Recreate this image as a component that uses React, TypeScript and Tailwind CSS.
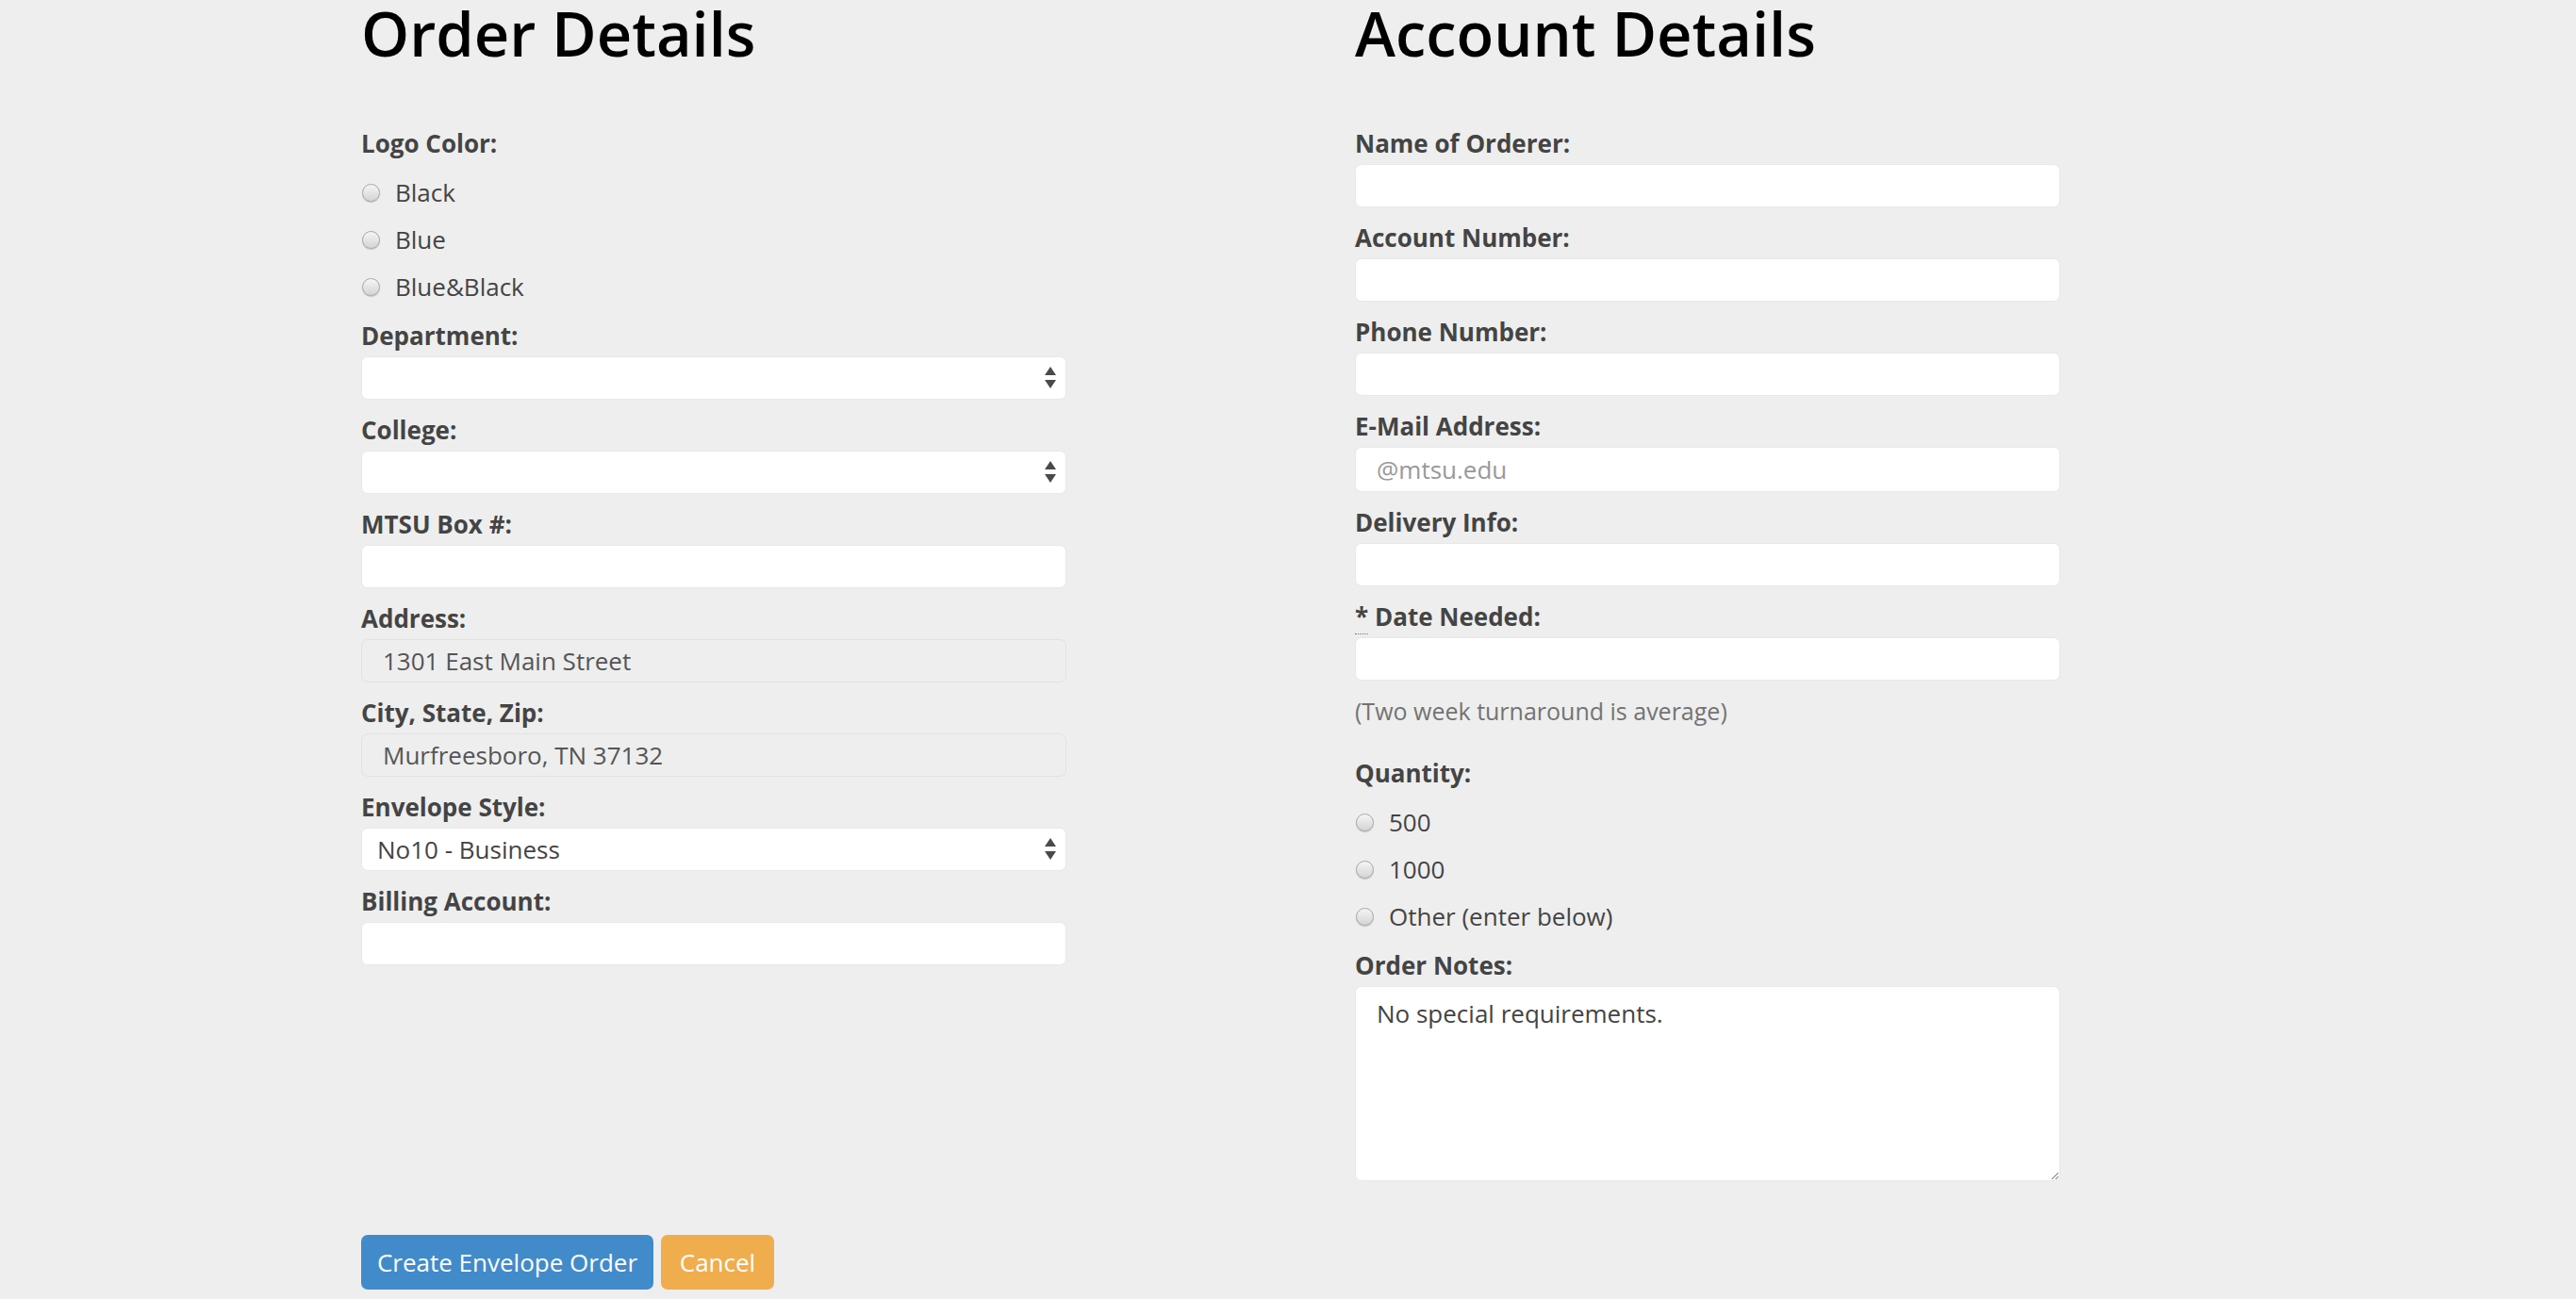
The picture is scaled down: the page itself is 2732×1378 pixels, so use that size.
import React from "react";

const Label = ({ children }: { children: React.ReactNode }) => (
  <label className="block text-[26px] leading-[36px] font-bold text-[#444] mb-[4px]">
    {children}
  </label>
);

const TextField = ({
  label,
  value,
  placeholder,
  readOnly,
  tall,
}: {
  label: React.ReactNode;
  value?: string;
  placeholder?: string;
  readOnly?: boolean;
  tall?: boolean;
}) => (
  <div className="mb-[14px]">
    <Label>{label}</Label>
    <input
      type="text"
      defaultValue={value}
      placeholder={placeholder}
      readOnly={readOnly}
      className={
        "block w-[748px] rounded-[7px] border px-[22px] text-[26px] text-[#555] outline-none placeholder:text-[#999] " +
        (tall ? "h-[48px] " : "h-[46px] ") +
        (readOnly
          ? "bg-[#eeeeee] border-[#e2e2e2]"
          : "bg-white border-[#e8e8e8]")
      }
    />
  </div>
);

const SelectField = ({ label, value }: { label: string; value?: string }) => (
  <div className="mb-[14px]">
    <Label>{label}</Label>
    <div className="relative flex h-[46px] w-[748px] items-center rounded-[7px] border border-[#e8e8e8] bg-white pl-[16px] text-[26px] text-[#444]">
      <span>{value}</span>
      <svg
        className="absolute right-[10px] top-[10px]"
        width="12"
        height="24"
        viewBox="0 0 12 24"
      >
        <polygon points="6,0 12,9 0,9" fill="#4a4a4a" />
        <polygon points="0,14 12,14 6,23" fill="#4a4a4a" />
      </svg>
    </div>
  </div>
);

const Radio = ({ text }: { text: string }) => (
  <div className="flex h-[50px] items-center">
    <span className="ml-[1px] h-[19px] w-[19px] rounded-full border border-[#a8a8a8] bg-gradient-to-b from-[#f6f6f6] to-[#d4d4d4] shadow-[0_1px_1px_rgba(0,0,0,0.2)]" />
    <span className="ml-[16px] text-[26px] leading-[36px] text-[#444]">{text}</span>
  </div>
);

const RadioGroup = ({ label, options }: { label: string; options: string[] }) => (
  <div className="mb-[9px]">
    <Label>{label}</Label>
    <div className="pt-[5px]">
      {options.map((o) => (
        <Radio key={o} text={o} />
      ))}
    </div>
  </div>
);

const Heading = ({ children }: { children: string }) => (
  <h1 className="text-[65px] leading-[70px] font-semibold text-black mb-[64px]">{children}</h1>
);

export default function App() {
  return (
    <div className="min-h-screen bg-[#eeeeee] pl-[383px] font-['Open_Sans',sans-serif]">
      <div className="flex">
        <div className="w-[1054px]">
          <Heading>Order Details</Heading>
          <RadioGroup label="Logo Color:" options={["Black", "Blue", "Blue&Black"]} />
          <SelectField label="Department:" />
          <SelectField label="College:" />
          <TextField label="MTSU Box #:" />
          <TextField label="Address:" value="1301 East Main Street" readOnly />
          <TextField label="City, State, Zip:" value="Murfreesboro, TN 37132" readOnly />
          <SelectField label="Envelope Style:" value="No10 - Business" />
          <TextField label="Billing Account:" />
        </div>
        <div className="w-[748px]">
          <Heading>Account Details</Heading>
          <TextField label="Name of Orderer:" />
          <TextField label="Account Number:" />
          <TextField label="Phone Number:" />
          <TextField label="E-Mail Address:" placeholder="@mtsu.edu" tall />
          <TextField label="Delivery Info:" />
          <TextField
            label={
              <>
                <abbr title="required" className="no-underline border-b border-dotted border-[#777]">
                  *
                </abbr>{" "}
                Date Needed:
              </>
            }
          />
          <p className="text-[25px] leading-[36px] text-[#737373] mb-[30px]">
            (Two week turnaround is average)
          </p>
          <RadioGroup label="Quantity:" options={["500", "1000", "Other (enter below)"]} />
          <div>
            <Label>Order Notes:</Label>
            <textarea
              defaultValue="No special requirements."
              className="block h-[207px] w-[748px] rounded-[7px] border border-[#e8e8e8] bg-white px-[22px] pt-[10px] text-[26px] leading-[36px] text-[#444] outline-none"
            />
          </div>
        </div>
      </div>
      <div className="mt-[57px] flex gap-[8px]">
        <button className="h-[58px] w-[310px] rounded-[7px] bg-[#428bca] text-[26px] text-white">
          Create Envelope Order
        </button>
        <button className="h-[58px] w-[120px] rounded-[7px] bg-[#f0ad4e] text-[26px] text-white">
          Cancel
        </button>
      </div>
    </div>
  );
}
